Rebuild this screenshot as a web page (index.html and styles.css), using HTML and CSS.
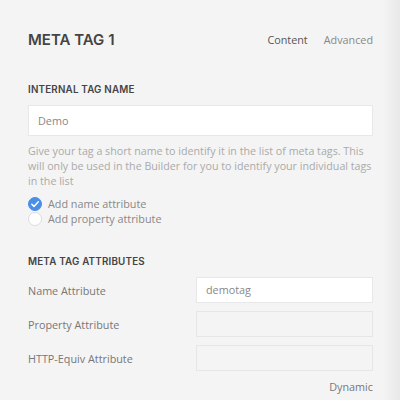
FILE: index.html
```html
<!DOCTYPE html>
<html lang="en">
<head>
<meta charset="UTF-8">
<meta name="viewport" content="width=device-width, initial-scale=1.0">
<title>Meta Tag</title>
<link rel="stylesheet" href="styles.css">
</head>
<body>

<div class="panel">
    <header class="panel-head">
        <h1>META TAG 1</h1>
        <nav class="tabs">
            <a href="#" class="active">Content</a>
            <a href="#">Advanced</a>
        </nav>
    </header>

    <section class="group">
        <h2>INTERNAL TAG NAME</h2>
        <div class="field">Demo</div>
        <p class="help">Give your tag a short name to identify it in the list of meta tags. This will only be used in the Builder for you to identify your individual tags in the list</p>
        <div class="radios">
            <label class="radio">
                <span class="dot checked">
                    <svg width="14" height="14" viewBox="0 0 14 14"><path d="M3.8 7.2l2.2 2.2 4.3-4.6" fill="none" stroke="#fff" stroke-width="1.5" stroke-linecap="round" stroke-linejoin="round"/></svg>
                </span>
                Add name attribute
            </label>
            <label class="radio">
                <span class="dot"></span>
                Add property attribute
            </label>
        </div>
    </section>

    <section class="group attrs">
        <h2>META TAG ATTRIBUTES</h2>
        <div class="row">
            <span class="label">Name Attribute</span>
            <div class="field small">demotag</div>
        </div>
        <div class="row">
            <span class="label">Property Attribute</span>
            <div class="field small empty"></div>
        </div>
        <div class="row">
            <span class="label">HTTP-Equiv Attribute</span>
            <div class="field small empty"></div>
        </div>
        <div class="dynamic">Dynamic</div>
        <div class="row">
            <span class="label"></span>
            <div class="field small empty"></div>
        </div>
    </section>
</div>

</body>
</html>
```

FILE: styles.css
```css
body {
    margin: 0;
    padding: 0;
    font-family: "Open Sans", Arial, sans-serif;
    background: linear-gradient(to right, #f4f4f4 383px, #e8e8e8 400px);
    overflow: hidden;
}
.panel {
    width: 345px;
    padding: 0 27px 0 28px;
}
.panel-head {
    display: flex;
    align-items: center;
    justify-content: space-between;
    height: 80px;
}
.panel-head h1 {
    margin: 0;
    font-family: Inter, sans-serif;
    font-size: 15px;
    font-weight: 600;
    color: #444;
    position: relative;
    top: -1px;
}
.tabs {
    display: flex;
    gap: 16px;
}
.tabs a {
    font-size: 10.8px;
    color: #888;
    text-decoration: none;
    position: relative;
    top: -1px;
}
.tabs a.active {
    color: #555;
}
.group h2 {
    margin: 0 0 6px;
    height: 19px;
    line-height: 20px;
    font-family: Inter, sans-serif;
    font-size: 9.8px;
    font-weight: 600;
    color: #444;
    letter-spacing: 0.2px;
}
.field {
    box-sizing: border-box;
    height: 31px;
    line-height: 29px;
    padding: 0 9px;
    background-color: #fff;
    border: 1px solid #e8e8e8;
    font-size: 10.8px;
    color: #888;
}
.field.small {
    width: 177px;
    height: 26px;
    line-height: 24px;
    padding: 0 9px;
}
.field.empty {
    background-color: #f4f4f4;
    border-color: #e6e6e6;
}
.help {
    margin: 8px 0 7px;
    font-size: 10.7px;
    line-height: 15px;
    color: #aaa;
}
.radios {
    display: flex;
    flex-direction: column;
}
.radio {
    display: flex;
    align-items: center;
    gap: 6px;
    height: 15px;
    font-size: 10.8px;
    color: #888;
}
.dot {
    box-sizing: border-box;
    width: 14px;
    height: 14px;
    border-radius: 50%;
    background-color: #fff;
    border: 1px solid #ddd;
}
.dot svg {
    display: block;
    margin: -1px;
}
.dot.checked {
    background-color: #4a8ee8;
    border-color: #4a8ee8;
}
.attrs {
    margin-top: 26px;
}
.row {
    display: flex;
    align-items: center;
    justify-content: space-between;
    margin-bottom: 8px;
}
.label {
    font-size: 10.8px;
    color: #777;
}
.dynamic {
    text-align: right;
    font-size: 10.8px;
    color: #777;
    line-height: 15px;
    margin: 0 0 13px;
}
```
